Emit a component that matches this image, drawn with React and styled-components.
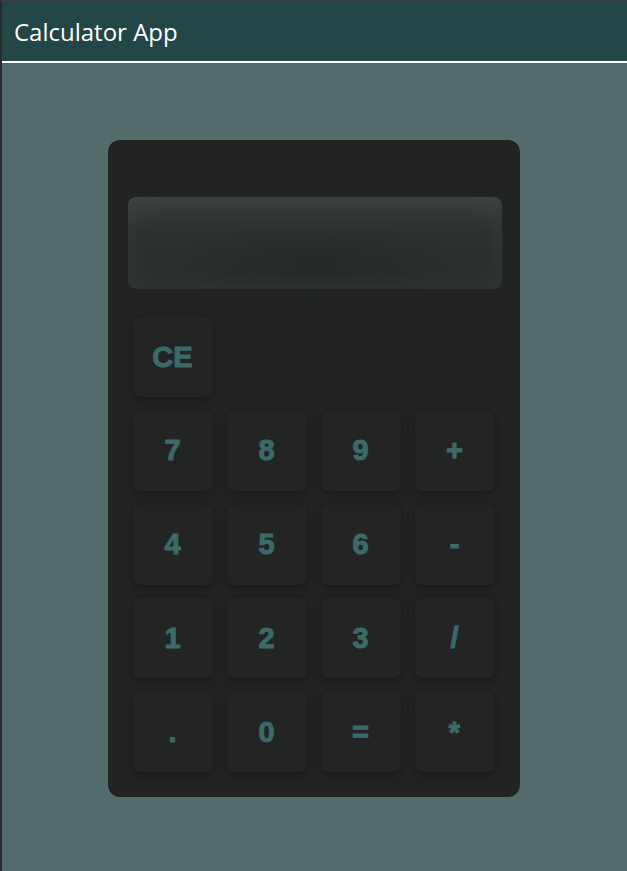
import React from "react";
import styled, { createGlobalStyle } from "styled-components";

const Global = createGlobalStyle`
  html, body { margin: 0; padding: 0; height: 100%; }
  body { background: #536c6b; font-family: "Open Sans", "Noto Sans", sans-serif; }
  #root { min-height: 100%; }
`;

const Page = styled.div`
  min-height: 871px;
  background: #536c6b;
  border-top: 2px solid #3c3f40;
  border-left: 2px solid #2a2c2c;
  box-sizing: border-box;
`;

const Header = styled.header`
  height: 59px;
  background: #234647;
  border-bottom: 2px solid #ffffff;
  display: flex;
  align-items: center;
  padding-left: 12px;
  color: #ffffff;
  font-size: 24px;
  font-family: "Open Sans", "Noto Sans", sans-serif;
`;

const Main = styled.main`
  display: flex;
  justify-content: center;
  padding-top: 77px;
  padding-right: 2px;
`;

const Calculator = styled.div`
  width: 412px;
  box-sizing: border-box;
  background: #222424;
  border-radius: 12px;
  padding: 57px 25px 25px 25px;
  display: flex;
  flex-direction: column;
`;

const Display = styled.div`
  height: 92px;
  margin: 0 -7px 0 -5px;
  border-radius: 8px;
  background:
    radial-gradient(ellipse 42% 40% at 50% 72%, rgba(28,32,32,0.45) 0%, rgba(28,32,32,0.2) 60%, rgba(28,32,32,0) 100%),
    linear-gradient(180deg, #393c3d 0%, #2d3031 40%, #2a2d2d 100%);
  box-shadow: inset 0 0 30px rgba(255,255,255,0.05);
`;

const Keys = styled.div`
  margin-top: 28px;
  display: grid;
  grid-template-columns: repeat(4, 80px);
  grid-auto-rows: 80px;
  column-gap: 14px;
  row-gap: 13.75px;
`;

const Key = styled.button`
  border: none;
  border-radius: 7px;
  background: #232525;
  box-shadow: 0 4px 8px rgba(0,0,0,0.22), 0 0 3px rgba(0,0,0,0.15);
  color: #3b6a6a;
  font-family: "Liberation Sans", Arial, sans-serif;
  font-weight: 900;
  font-size: 29px;
  -webkit-text-stroke: 1px #3b6a6a;
  display: flex;
  align-items: center;
  justify-content: center;
  padding: 0;
`;

const Spacer = styled.div`
  grid-column: span 3;
`;

const rows = [
  ["7", "8", "9", "+"],
  ["4", "5", "6", "-"],
  ["1", "2", "3", "/"],
  [".", "0", "=", "*"],
];

export default function App() {
  return (
    <>
      <Global />
      <Page>
        <Header>Calculator App</Header>
        <Main>
          <Calculator>
            <Display />
            <Keys>
              <Key>CE</Key>
              <Spacer />
              {rows.flat().map((k) => (
                <Key key={k}>{k}</Key>
              ))}
            </Keys>
          </Calculator>
        </Main>
      </Page>
    </>
  );
}
